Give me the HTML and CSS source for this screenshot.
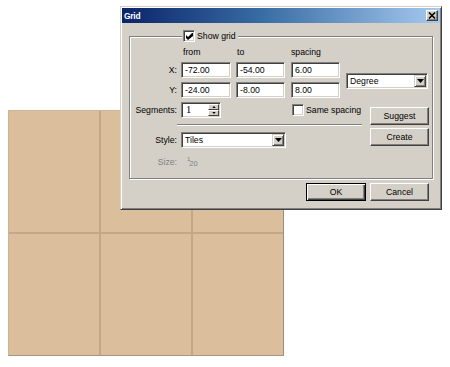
FILE: index.html
```html
<!DOCTYPE html>
<html>
<head>
<meta charset="utf-8">
<title>Grid</title>
<link rel="stylesheet" href="styles.css">
</head>
<body>
<div class="board">
  <div class="cell"></div><div class="cell"></div><div class="cell"></div>
  <div class="cell"></div><div class="cell"></div><div class="cell"></div>
</div>

<div class="dialog">
  <div class="titlebar">
    <span class="title">Grid</span>
    <span class="close"><svg width="8" height="7" viewBox="0 0 8 7"><path d="M1 0.5 L7 6.5 M7 0.5 L1 6.5" stroke="#000" stroke-width="1.6" fill="none"/></svg></span>
  </div>

  <div class="group">
    <div class="legend">
      <span class="check"><svg width="7" height="7" viewBox="0 0 7 7"><path d="M0 2 L2 4 L6 0 L7 0 L7 3 L2 7 L0 5 Z" fill="#000"/></svg></span>
      <span>Show grid</span>
    </div>

    <div class="form">
      <span class="hdr row-1 col-a pad2">from</span>
      <span class="hdr row-1 col-b pad1">to</span>
      <span class="hdr row-1 col-c">spacing</span>

      <span class="lbl row-2">X:</span>
      <div class="field row-2 col-a">-72.00</div>
      <div class="field row-2 col-b narrow">-54.00</div>
      <div class="field row-2 col-c narrow">6.00</div>

      <span class="lbl row-3">Y:</span>
      <div class="field row-3 col-a">-24.00</div>
      <div class="field row-3 col-b narrow">-8.00</div>
      <div class="field row-3 col-c narrow">8.00</div>

      <span class="lbl row-4">Segments:</span>
      <div class="spin row-4 col-a">
        <span class="spin-val">1</span>
        <span class="spin-btns">
          <span class="spin-btn"><svg width="5" height="3" viewBox="0 0 5 3"><polygon points="2.5,0 5,3 0,3" fill="#000"/></svg></span>
          <span class="spin-btn"><svg width="5" height="3" viewBox="0 0 5 3"><polygon points="0,0 5,0 2.5,3" fill="#000"/></svg></span>
        </span>
      </div>
      <div class="same row-4">
        <span class="check"></span>
        <span>Same spacing</span>
      </div>

      <div class="sep row-5"></div>

      <span class="lbl row-6">Style:</span>
      <div class="select style-select row-6">
        <span class="select-text">Tiles</span>
        <span class="drop"><svg width="7" height="4" viewBox="0 0 7 4"><polygon points="0,0 7,0 3.5,4" fill="#000"/></svg></span>
      </div>

      <span class="lbl gray row-7">Size:</span>
      <span class="size-val gray row-7 col-a"><span class="sup">1</span><span class="sub">20</span></span>

      <div class="side">
        <div class="select degree">
          <span class="select-text">Degree</span>
          <span class="drop"><svg width="7" height="4" viewBox="0 0 7 4"><polygon points="0,0 7,0 3.5,4" fill="#000"/></svg></span>
        </div>
        <div class="btn suggest">Suggest</div>
        <div class="btn create">Create</div>
      </div>
    </div>
  </div>

  <div class="actions">
    <div class="btn default ok">OK</div>
    <div class="btn cancel">Cancel</div>
  </div>
</div>
</body>
</html>
```

FILE: styles.css
```css
* { box-sizing: border-box; }

html, body {
  margin: 0;
  background: #fff;
}

body {
  padding: 110px 0 0 8px;
  font-family: "Liberation Sans", Arial, sans-serif;
  font-size: 8.7px;
  color: #000;
}

/* ---------- tan board ---------- */
.board {
  width: 276px;
  height: 246px;
  display: grid;
  grid-template-columns: 90px 90px 90px;
  grid-template-rows: 121px 121px;
  gap: 2px;
  background: #c2a789;
  border: 1px solid;
  border-color: #cdb497 #9d8c7a #a8957f #cdb497;
}

.cell { background: #dbbe9c; }

/* ---------- dialog window ---------- */
.dialog {
  position: absolute;
  left: 120px;
  top: 6px;
  width: 322px;
  height: 204px;
  padding: 1px;
  background: #d4d0c8;
  border: 1px solid;
  border-color: #d4d0c8 #404040 #404040 #d4d0c8;
  box-shadow: inset 1px 1px #fff, inset -1px -1px #808080;
  display: flex;
  flex-direction: column;
}

.titlebar {
  height: 15px;
  background: linear-gradient(to right, #0a246a, #3a6ea5 45%, #a6caf0);
  display: flex;
  align-items: center;
}

.title {
  padding-left: 2px;
  color: #fff;
  font-weight: bold;
  font-size: 8.4px;
  letter-spacing: -0.2px;
}

.close {
  margin-left: auto;
  margin-right: 2px;
  width: 12px;
  height: 11px;
  background: #d4d0c8;
  border: 1px solid;
  border-color: #fff #404040 #404040 #fff;
  box-shadow: inset -1px -1px #808080;
  display: flex;
  align-items: center;
  justify-content: center;
}

/* ---------- group box ---------- */
.group {
  position: relative;
  margin: 13px 7px 0 7px;
  height: 143px;
  padding: 6px 3px 4px 3px;
  border: 1px solid #808080;
  box-shadow: inset 1px 1px #fff, 1px 1px #fff;
}

.legend {
  position: absolute;
  top: -7px;
  left: 52px;
  padding: 0 2px 0 1px;
  background: #d4d0c8;
  display: flex;
  align-items: center;
  gap: 2px;
  height: 12px;
}

.check {
  width: 12px;
  height: 12px;
  background: #fff;
  border: 1px solid;
  border-color: #808080 #fff #fff #808080;
  box-shadow: inset 1px 1px #404040, inset -1px -1px #d4d0c8;
  display: flex;
  align-items: center;
  justify-content: center;
  flex: none;
}

.form {
  display: grid;
  grid-template-columns: 43px 50px 50px 50px 83px;
  grid-template-rows: 17px 20px 20px 20px 10px 20px 24px;
  column-gap: 5px;
  align-items: center;
}

.row-1 { grid-row: 1; }
.row-2 { grid-row: 2; }
.row-3 { grid-row: 3; }
.row-4 { grid-row: 4; }
.row-5 { grid-row: 5; }
.row-6 { grid-row: 6; }
.row-7 { grid-row: 7; }

.col-a { grid-column: 2; }
.col-b { grid-column: 3; }
.col-c { grid-column: 4; }

.pad2 { padding-left: 2px; }
.pad1 { padding-left: 1px; }

.lbl {
  grid-column: 1;
  text-align: right;
  margin-right: -1px;
  white-space: nowrap;
}

.gray { color: #808080; }

.field {
  height: 16px;
  width: 50px;
  padding: 0 0 0 3px;
  background: #fff;
  border: 1px solid;
  border-color: #808080 #fff #fff #808080;
  box-shadow: inset 1px 1px #404040, inset -1px -1px #d4d0c8;
  line-height: 14px;
  white-space: nowrap;
}

.field.narrow { width: 49px; }

/* spin */
.spin {
  width: 40px;
  height: 16px;
  background: #fff;
  border: 1px solid;
  border-color: #808080 #fff #fff #808080;
  box-shadow: inset 1px 1px #404040, inset -1px -1px #d4d0c8;
  display: flex;
  padding: 1px;
}

.spin-val {
  flex: 1;
  padding-left: 3px;
  font-family: "Liberation Serif", "Times New Roman", serif;
  font-size: 10.5px;
  line-height: 12px;
}

.spin-btns {
  width: 11px;
  display: flex;
  flex-direction: column;
}

.spin-btn {
  flex: 1;
  background: #d4d0c8;
  border: 1px solid;
  border-color: #fff #404040 #404040 #fff;
  display: flex;
  align-items: center;
  justify-content: center;
}

.spin-btn svg { width: 4px; height: 2px; }

.same {
  grid-column: 4 / 6;
  display: flex;
  align-items: center;
  gap: 2px;
  padding-left: 1px;
  white-space: nowrap;
}

.sep {
  grid-column: 1 / 5;
  margin-left: 44px;
  margin-right: -21px;
  height: 2px;
  border-top: 1px solid #808080;
  border-bottom: 1px solid #fff;
}

/* selects */
.select {
  height: 16px;
  background: #fff;
  border: 1px solid;
  border-color: #808080 #fff #fff #808080;
  box-shadow: inset 1px 1px #404040, inset -1px -1px #d4d0c8;
  display: flex;
  align-items: stretch;
  padding: 1px;
}

.select-text {
  flex: 1;
  padding-left: 2px;
  line-height: 12px;
}

.drop {
  width: 12px;
  background: #d4d0c8;
  border: 1px solid;
  border-color: #d4d0c8 #404040 #404040 #d4d0c8;
  box-shadow: inset 1px 1px #fff, inset -1px -1px #808080;
  display: flex;
  align-items: center;
  justify-content: center;
}

.style-select {
  grid-column: 2 / 4;
  width: 105px;
}

.size-val {
  padding-left: 6px;
  white-space: nowrap;
}

.sup {
  font-size: 6px;
  vertical-align: 3px;
}

.sub {
  font-size: 7.5px;
  vertical-align: -2px;
  margin-left: -1px;
}

/* right side column */
.side {
  grid-column: 5;
  grid-row: 1 / 8;
  align-self: stretch;
  display: flex;
  flex-direction: column;
  padding-top: 30px;
}

.degree {
  width: 82px;
  align-self: flex-start;
}

/* buttons */
.btn {
  height: 18px;
  background: #d4d0c8;
  border: 1px solid;
  border-color: #fff #404040 #404040 #fff;
  box-shadow: inset -1px -1px #808080;
  display: flex;
  align-items: center;
  justify-content: center;
  white-space: nowrap;
}

.suggest, .create {
  width: 59px;
  align-self: flex-end;
}

.suggest { margin-top: 18px; }
.create { margin-top: 3px; }

.btn.default {
  border-color: #000;
  box-shadow: inset 1px 1px #fff, inset -1px -1px #404040, inset -2px -2px #808080;
}

.actions {
  display: flex;
  justify-content: flex-end;
  gap: 4px;
  margin: 4px 11px 0 0;
}

.ok { width: 60px; }
.cancel { width: 59px; }
```
